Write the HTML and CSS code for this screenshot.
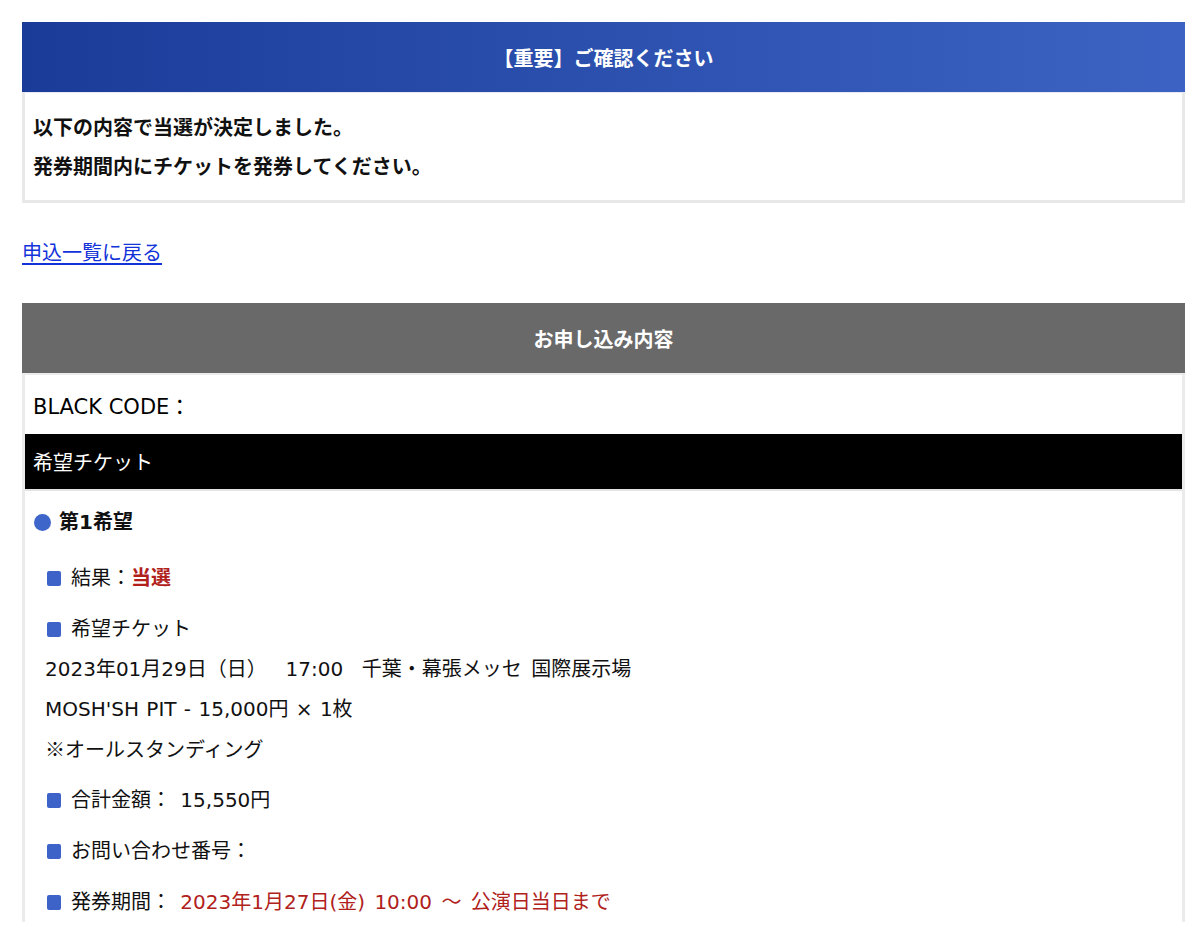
FILE: index.html
```html
<!DOCTYPE html>
<html lang="ja">
<head>
<meta charset="utf-8">
<title>申込内容</title>
<link rel="stylesheet" href="styles.css">
</head>
<body>
<div class="page">
  <section class="notice">
    <h2 class="notice-head">【重要】ご確認ください</h2>
    <div class="notice-body">
      <p>以下の内容で当選が決定しました。</p>
      <p>発券期間内にチケットを発券してください。</p>
    </div>
  </section>

  <div class="back"><a href="#">申込一覧に戻る</a></div>

  <section class="detail">
    <h2 class="detail-head">お申し込み内容</h2>
    <div class="detail-body">
      <div class="code-row">BLACK CODE：</div>
      <div class="ticket-bar">希望チケット</div>
      <div class="choice">
        <div class="choice-title"><span class="dot"></span>第1希望</div>
        <div class="item"><span class="sq"></span>結果：<strong class="red">当選</strong></div>
        <div class="item">
          <div><span class="sq"></span>希望チケット</div>
          <div class="sub">2023年01月29日（日）&nbsp; 17:00&nbsp; 千葉・幕張メッセ 国際展示場</div>
          <div class="sub tight">MOSH'SH PIT - 15,000円 × 1枚</div>
          <div class="sub jp">※オールスタンディング</div>
        </div>
        <div class="item"><span class="sq"></span>合計金額： 15,550円</div>
        <div class="item"><span class="sq"></span>お問い合わせ番号：</div>
        <div class="item"><span class="sq"></span>発券期間： <span class="red-n">2023年1月27日(金) 10:00 〜 公演日当日まで</span></div>
      </div>
    </div>
  </section>
</div>
</body>
</html>
```

FILE: styles.css
```css
* { box-sizing: border-box; }
html, body { margin: 0; padding: 0; background: #fff; }
body {
  font-family: "DejaVu Sans", "Noto Sans CJK JP", sans-serif;
  font-size: 20px;
  color: #111;
}
.jp { font-family: "Noto Sans CJK JP", sans-serif; }
.page { padding: 22px 15px 0 22px; }
h2, p { margin: 0; }

.notice-head {
  height: 70px;
  display: flex;
  align-items: center;
  justify-content: center;
  color: #fff;
  font-size: 20px;
  font-weight: bold;
  background: linear-gradient(90deg, #1b3b98 0%, #2a4eac 45%, #3c63c3 100%);
}
.notice-body {
  border: 3px solid #e8e8e8;
  border-top: 1px solid #e6e9f2;
  padding: 16px 10px 13px 8px;
  font-weight: bold;
  line-height: 39px;
}

.back {
  margin: 35px 0 35px;
  line-height: 30px;
}
.back a { color: #1233d9; text-decoration: underline; text-underline-offset: 3px; }

.detail-head {
  height: 70px;
  display: flex;
  align-items: center;
  justify-content: center;
  background: #696969;
  color: #fff;
  font-size: 20px;
  font-weight: bold;
}
.detail-body {
  border-left: 3px solid #ebebeb;
  border-right: 3px solid #ebebeb;
  border-top: 2px solid #ececec;
}
.code-row {
  height: 59px;
  display: flex;
  align-items: center;
  padding: 0 8px;
  color: #000;
  font-size: 21px;
}
.ticket-bar {
  height: 57px;
  display: flex;
  align-items: center;
  padding: 0 8px;
  background: #000;
  color: #fff;
  border-bottom: 2px solid #e4e4e4;
}
.choice { padding: 11px 8px 0; }
.choice-title {
  display: flex;
  align-items: center;
  line-height: 40px;
  font-weight: bold;
  margin-bottom: 16px;
}
.dot {
  width: 17px;
  height: 17px;
  border-radius: 50%;
  background: #3e65c9;
  margin: 0 8px 0 1px;
}
.item {
  line-height: 40px;
  padding-left: 12px;
  margin-bottom: 11px;
  word-spacing: 3px;
}
.item .tight { word-spacing: 1px; }
.sq {
  display: inline-block;
  width: 14px;
  height: 15px;
  border-radius: 2px;
  background: #3e63c8;
  margin: 0 10px 0 2px;
  vertical-align: -1px;
}
.red { color: #b0211b; font-weight: bold; }
.red-n { color: #b0211b; }
```
